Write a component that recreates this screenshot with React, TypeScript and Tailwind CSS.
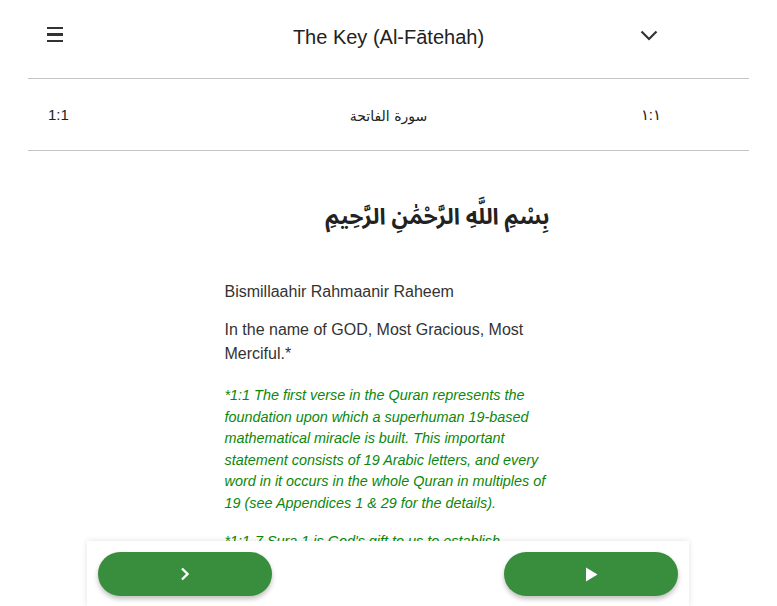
import React from "react";

export default function App() {
  return (
    <div className="relative w-[777px] h-[606px] overflow-hidden bg-white text-[#333333] font-['Liberation_Sans',Arial,sans-serif]">
      <div className="mx-[28px]">
        {/* Header */}
        <div className="grid grid-cols-[1fr_auto_1fr] items-center h-[79px] border-b border-[#c4c4c4] pb-[4px]">
          <div className="flex justify-start pl-[19px]">
            <div className="flex flex-col gap-[4px] w-[16px] -mt-[5px]">
              <div className="h-[2.5px] bg-[#333]" />
              <div className="h-[2.5px] bg-[#333]" />
              <div className="h-[2.5px] bg-[#333]" />
            </div>
          </div>
          <div className="text-[20px] leading-[24px] text-[#222] text-center">The Key (Al-Fātehah)</div>
          <div className="flex justify-end pr-[91px]">
            <svg width="18" height="11" viewBox="0 0 18 11" className="-mt-[4px]">
              <polyline points="1.5,1.5 9,9 16.5,1.5" fill="none" stroke="#333" strokeWidth="2.2" />
            </svg>
          </div>
        </div>
        {/* Verse row */}
        <div className="grid grid-cols-[1fr_auto_1fr] items-center h-[72px] border-b border-[#c4c4c4] text-[15px] text-[#222]">
          <div className="pl-[20px] mt-[2px]">1:1</div>
          <div dir="rtl" className="font-['DejaVu_Sans',sans-serif] text-[14px] mt-[3px]">سورة الفاتحة</div>
          <div className="flex justify-end pr-[88px] mt-[2px]">١:١</div>
        </div>
      </div>

      {/* Content */}
      <div className="mx-auto w-[326px] pt-[46px] -translate-x-[1px]">
        <div dir="rtl" className="text-right font-bold text-[22.5px] leading-[40px] text-[#222] font-['Noto_Sans_Arabic','DejaVu_Sans',sans-serif] pr-[1px]">
          بِسْمِ اللَّهِ الرَّحْمَٰنِ الرَّحِيمِ
        </div>
        <p className="mt-[43px] text-[16px] leading-[24px]">Bismillaahir Rahmaanir Raheem</p>
        <p className="mt-[14px] text-[16px] leading-[24px]">In the name of GOD, Most Gracious, Most Merciful.*</p>
        <p className="mt-[19px] pr-[4px] text-[14.4px] leading-[21.6px] italic text-[#0b870b]">
          *1:1 The first verse in the Quran represents the foundation upon which a superhuman 19-based mathematical miracle is built. This important statement consists of 19 Arabic letters, and every word in it occurs in the whole Quran in multiples of 19 (see Appendices 1 &amp; 29 for the details).
        </p>
        <p className="mt-[16px] pr-[4px] text-[14.4px] leading-[21.6px] italic text-[#0b870b]">
          *1:1-7 Sura 1 is God's gift to us to establish contact with Him through the daily Contact Prayers (Salat).
        </p>
      </div>

      {/* Bottom bar */}
      <div className="absolute bottom-0 left-[87px] w-[602px] h-[65px] bg-white shadow-[0_0_6px_rgba(0,0,0,0.12)] flex justify-between px-[11px] pt-[11px]">
        <button className="w-[174px] h-[44px] rounded-full bg-[#388e3c] shadow-[0_3px_5px_rgba(0,0,0,0.25)] flex items-center justify-center">
          <svg width="10" height="14" viewBox="0 0 10 14">
            <polyline points="2,1.5 7.5,7 2,12.5" fill="none" stroke="white" strokeWidth="2.4" />
          </svg>
        </button>
        <button className="w-[174px] h-[44px] rounded-full bg-[#388e3c] shadow-[0_3px_5px_rgba(0,0,0,0.25)] flex items-center justify-center">
          <svg width="13" height="15" viewBox="0 0 13 15" className="ml-[1px]">
            <polygon points="1,0.5 12.5,7.5 1,14.5" fill="white" />
          </svg>
        </button>
      </div>
    </div>
  );
}
